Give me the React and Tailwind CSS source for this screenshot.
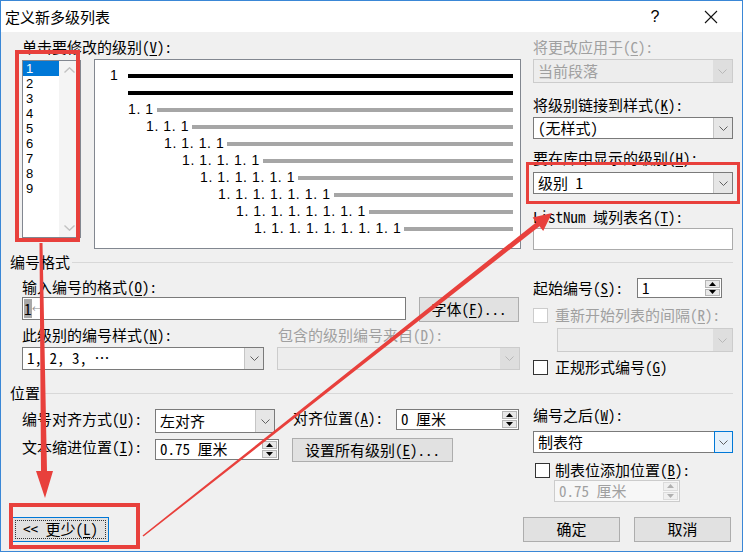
import React from "react";

const GRAY = "text-[#a0a0a0]";

function Key({ k }) {
  return <span className="underline underline-offset-[2px]">{k}</span>;
}

function Label({ pre, k, post = "):", gray, className = "" }) {
  return (
    <div className={`h-[16px] leading-[16px] whitespace-pre ${gray ? GRAY : "text-black"} ${className}`}>
      {pre}(<Key k={k} />{post}
    </div>
  );
}

function Chevron({ color = "#606060" }) {
  return (
    <svg width="9" height="5" viewBox="0 0 9 5">
      <path d="M0.5 0.5 L4.5 4.5 L8.5 0.5" fill="none" stroke={color} strokeWidth="1" />
    </svg>
  );
}

function Select({ className = "", children, disabled, focused }) {
  let box = "border-[#7a7a7a] bg-white";
  let btn = "bg-[#e6e6e6] border-l border-[#c5c5c5]";
  if (disabled) {
    box = "border-[#cccccc] bg-[#ededed]";
    btn = "bg-[#dedede]";
  }
  if (focused) btn = "bg-[#e5f1fb] border border-[#0078d7] -my-px -mr-px";
  return (
    <div className={`flex border ${box} ${className}`}>
      <div className={`flex-1 flex items-center pl-[4px] whitespace-pre ${disabled ? GRAY : ""}`}>{children}</div>
      <div className={`w-[19px] flex items-center justify-center ${btn}`}>
        <Chevron color={disabled ? "#b8b8b8" : "#606060"} />
      </div>
    </div>
  );
}

function Spin({ className = "", children, disabled }) {
  const tri = disabled ? "#b0b0b0" : "#000";
  return (
    <div className={`flex border ${disabled ? "border-[#cccccc] bg-[#f7f7f7]" : "border-[#7a7a7a] bg-white"} ${className}`}>
      <div className={`flex-1 flex items-center pl-[4px] whitespace-pre ${disabled ? GRAY : ""}`}>{children}</div>
      <div className="w-[17px] flex flex-col p-px gap-px">
        <div className={`flex-1 flex items-center justify-center border ${disabled ? "border-[#dcdcdc] bg-[#f0f0f0]" : "border-[#b5b5b5] bg-[#e8e8e8]"}`}>
          <svg width="7" height="4" viewBox="0 0 7 4"><path d="M0 4 L3.5 0 L7 4Z" fill={tri} /></svg>
        </div>
        <div className={`flex-1 flex items-center justify-center border ${disabled ? "border-[#dcdcdc] bg-[#f0f0f0]" : "border-[#b5b5b5] bg-[#e8e8e8]"}`}>
          <svg width="7" height="4" viewBox="0 0 7 4"><path d="M0 0 L3.5 4 L7 0Z" fill={tri} /></svg>
        </div>
      </div>
    </div>
  );
}

function Button({ className = "", children }) {
  return (
    <div className={`flex items-center justify-center bg-[#e1e1e1] border border-[#adadad] whitespace-pre ${className}`}>
      {children}
    </div>
  );
}

function Check({ disabled }) {
  return (
    <div className={`w-[15px] h-[15px] border ${disabled ? "border-[#cccccc] bg-white" : "border-[#333333] bg-white"}`} />
  );
}

function Separator({ title }) {
  return (
    <div className="h-[16px] flex items-center shrink-0 pl-[9px] pr-[9px]">
      <span className="leading-[16px]">{title}</span>
      <div className="flex-1 h-px bg-[#d8d8d8] ml-[2px] mt-[1px]" />
    </div>
  );
}

function Preview() {
  const rows = [];
  for (let lvl = 2; lvl <= 9; lvl++) {
    const text = Array(lvl).fill("1").join(". ");
    rows.push(
      <div key={lvl} className="h-[17px] flex items-center">
        <div className="shrink-0" style={{ width: 33 + (lvl - 2) * 18 }} />
        <span className="font-['Liberation_Sans',sans-serif] text-[14px] tracking-[0.6px] whitespace-pre leading-[17px]">{text}</span>
        <div className="flex-1 h-[4px] bg-[#a6a6a6] ml-[3px]" />
      </div>
    );
  }
  return (
    <div className="ml-[13px] w-[427px] h-[190px] border border-[#828790] bg-white pt-[7px] pr-[7px]">
      <div className="h-[17px] flex items-center">
        <span className="ml-[15px] font-['Liberation_Sans',sans-serif] text-[14px] leading-[17px]">1</span>
        <div className="flex-1 h-[4px] bg-black ml-[10px]" />
      </div>
      <div className="h-[17px] flex items-center">
        <div className="flex-1 h-[4px] bg-black ml-[33px]" />
      </div>
      {rows}
    </div>
  );
}

function ListBox() {
  const items = ["1", "2", "3", "4", "5", "6", "7", "8", "9"];
  return (
    <div className="mt-[1px] w-[59px] h-[178px] border border-[#828790] bg-white flex">
      <div className="w-[36px]">
        {items.map((n, i) => (
          <div
            key={n}
            className={`h-[15px] leading-[15px] text-[13px] font-['Liberation_Sans',sans-serif] pl-[3px] ${i === 0 ? "bg-[#0078d7] text-white" : ""}`}
          >
            {n}
          </div>
        ))}
      </div>
      <div className="flex-1 bg-[#f4f4f4] flex flex-col items-center justify-between py-[6px]">
        <svg width="11" height="6" viewBox="0 0 11 6"><path d="M0.5 5.5 L5.5 0.8 L10.5 5.5" fill="none" stroke="#c2c2c2" strokeWidth="1.4" /></svg>
        <svg width="11" height="6" viewBox="0 0 11 6"><path d="M0.5 0.5 L5.5 5.2 L10.5 0.5" fill="none" stroke="#c2c2c2" strokeWidth="1.4" /></svg>
      </div>
    </div>
  );
}

function Annotations() {
  return (
    <>
      <div className="absolute left-[14px] top-[49px] w-[65px] h-[192px] border-4 border-[#e8403c] pointer-events-none" />
      <div className="absolute left-[525px] top-[161px] w-[214px] h-[42px] border-[3px] border-[#e8403c] pointer-events-none" />
      <div className="absolute left-[8px] top-[502px] w-[131px] h-[46px] border-4 border-[#e8403c] pointer-events-none" />
      <svg className="absolute left-[-1px] top-[-1px] pointer-events-none" width="743" height="552" viewBox="0 0 743 552">
        <polygon points="39.5,243 42.5,243 47,471 53,471 45,498 36,471 41,471" fill="#e8403c" />
        <polygon points="142.5,535.4 536.3,222.2 532.6,217.5 552,213 543.2,230.9 539.5,226.2 143.5,536.6" fill="#e8403c" />
      </svg>
    </>
  );
}

export default function App() {
  return (
    <div className="relative w-[743px] h-[552px] border border-[#3a87d6] bg-[#f0f0f0] flex flex-col overflow-hidden text-[15px] text-black font-['Noto_Sans_Mono_CJK_SC','Noto_Sans_CJK_SC',sans-serif]">
      {/* title bar */}
      <div className="h-[31px] bg-white flex items-center shrink-0 font-['Noto_Sans_CJK_SC',sans-serif]">
        <div className="pl-[4px] flex-1 leading-[20px]">定义新多级列表</div>
        <div className="w-[20px] text-center text-[16px] font-['Liberation_Sans',sans-serif]">?</div>
        <div className="ml-[38px] mr-[23px] w-[16px] flex items-center justify-center">
          <svg width="14" height="14" viewBox="0 0 14 14">
            <path d="M1 1 L13 13 M13 1 L1 13" stroke="#111" strokeWidth="1.1" />
          </svg>
        </div>
      </div>

      {/* levels + preview */}
      <div className="h-[222px] flex shrink-0">
        <div className="ml-[21px] w-[499px]">
          <Label className="mt-[7px]" pre="单击要修改的级别" k="V" />
          <div className="flex items-start mt-[4px]">
            <ListBox />
            <Preview />
          </div>
        </div>
        <div className="ml-[12px] w-[200px]">
          <Label className="mt-[7px]" gray pre="将更改应用于" k="C" />
          <Select className="mt-[4px] h-[24px]" disabled>当前段落</Select>
          <Label className="mt-[14px]" pre="将级别链接到样式" k="K" />
          <Select className="mt-[4px] h-[22px]">(无样式)</Select>
          <Label className="mt-[11px]" pre="要在库中显示的级别" k="H" />
          <Select className="mt-[6px] h-[22px]">级别 1</Select>
          <Label className="mt-[15px]" pre="ListNum 域列表名" k="T" />
          <div className="mt-[3px] h-[22px] border border-[#ababab] bg-white" />
        </div>
      </div>

      <Separator title="编号格式" />

      {/* number format */}
      <div className="h-[115px] flex shrink-0">
        <div className="ml-[21px] w-[499px]">
          <Label className="mt-[9px]" pre="输入编号的格式" k="O" />
          <div className="flex items-start mt-[2px]">
            <div className="w-[384px] h-[23px] border border-[#7a7a7a] bg-white flex items-center pl-[1px]">
              <span className="bg-[#a8a8a8] h-[19px] leading-[19px] w-[8px]">1</span>
              <span className="text-[9px] text-[#8a8a8a] leading-[19px]">←</span>
            </div>
            <Button className="ml-[13px] w-[100px] h-[25px]">字体(<Key k="F" />)...</Button>
          </div>
          <div className="flex mt-[5px]">
            <Label className="w-[256px]" pre="此级别的编号样式" k="N" />
            <Label gray pre="包含的级别编号来自" k="D" />
          </div>
          <div className="flex mt-[4px]">
            <Select className="w-[242px] h-[23px]">1, 2, 3, …</Select>
            <Select className="ml-[13px] w-[243px] h-[23px]" disabled />
          </div>
        </div>
        <div className="ml-[12px] w-[200px]">
          <div className="mt-[8px] h-[20px] flex items-center">
            <Label className="w-[104px]" pre="起始编号" k="S" />
            <Spin className="w-[85px] h-[20px]">1</Spin>
          </div>
          <div className="mt-[9px] h-[16px] flex items-center">
            <Check disabled />
            <Label className="ml-[7px]" gray pre="重新开始列表的间隔" k="R" />
          </div>
          <Select className="ml-[24px] mt-[5px] w-[176px] h-[24px]" disabled />
          <div className="mt-[7px] h-[16px] flex items-center">
            <Check />
            <Label className="ml-[7px]" pre="正规形式编号" k="G" post=")" />
          </div>
        </div>
      </div>

      <Separator title="位置" />

      {/* position */}
      <div className="h-[111px] flex shrink-0">
        <div className="ml-[21px] w-[499px]">
          <div className="flex items-start mt-[8px]">
            <Label className="w-[133px] mt-[2px]" pre="编号对齐方式" k="U" />
            <Select className="w-[120px] h-[24px]">左对齐</Select>
            <Label className="ml-[18px] w-[103px] mt-[1px]" pre="对齐位置" k="A" />
            <Spin className="w-[123px] h-[21px]">0 厘米</Spin>
          </div>
          <div className="flex items-start mt-[5px]">
            <Label className="w-[133px] mt-[1px]" pre="文本缩进位置" k="I" />
            <Spin className="w-[124px] h-[21px] mt-[1px]">0.75 厘米</Spin>
            <Button className="ml-[13px] w-[161px] h-[24px]">设置所有级别(<Key k="E" />)...</Button>
          </div>
        </div>
        <div className="ml-[12px] w-[200px]">
          <Label className="mt-[6px]" pre="编号之后" k="W" />
          <Select className="mt-[8px] h-[22px]" focused>制表符</Select>
          <div className="mt-[9px] h-[16px] flex items-center">
            <div className="ml-[2px]"><Check /></div>
            <Label className="ml-[5px]" pre="制表位添加位置" k="B" />
          </div>
          <Spin className="ml-[21px] mt-[2px] w-[126px] h-[22px]" disabled>0.75 厘米</Spin>
        </div>
      </div>

      {/* buttons */}
      <div className="flex mt-[5px] shrink-0">
        <div className="ml-[11px] w-[97px] h-[25px] border border-[#0078d7] bg-[#e1e1e1] p-[2px]">
          <div className="w-full h-full border border-dotted border-[#333] flex items-center justify-center whitespace-pre">
            {"<< 更少("}<Key k="L" />)
          </div>
        </div>
        <Button className="ml-[414px] w-[97px] h-[25px]">确定</Button>
        <Button className="ml-[14px] w-[97px] h-[25px]">取消</Button>
      </div>

      <Annotations />
    </div>
  );
}
